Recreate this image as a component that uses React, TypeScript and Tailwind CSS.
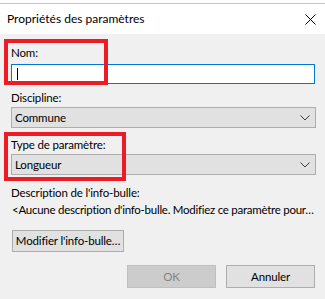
import React from "react"

const ChevronDown = () => (
  <svg width="10" height="6" viewBox="0 0 10 6" className="shrink-0">
    <path d="M0.5 0.5 L5 5 L9.5 0.5" fill="none" stroke="#3c3c3c" strokeWidth="1" />
  </svg>
)

const CloseIcon = () => (
  <svg width="11" height="11" viewBox="0 0 11 11">
    <path d="M0.5 0.5 L10.5 10.5 M10.5 0.5 L0.5 10.5" fill="none" stroke="#000" strokeWidth="1" />
  </svg>
)

function Combo({ value }: { value: string }) {
  return (
    <div className="mt-[1px] flex h-[21px] w-[305px] items-center justify-between border border-[#adadad] bg-[#e1e1e1] pl-[3px] pr-[5px]">
      <span className="leading-[16px]">{value}</span>
      <ChevronDown />
    </div>
  )
}

export default function App() {
  return (
    <div
      className="relative h-[299px] w-[325px] overflow-hidden bg-[#f0f0f0] text-[11.5px] tracking-[-0.15px] text-black"
      style={{ fontFamily: 'Lato, "Noto Sans", sans-serif' }}
    >
      {/* window frame */}
      <div className="h-[3px] bg-white" />
      <div className="h-[1px] bg-[#c4c4c4]" />
      <div className="flex h-[30px] items-center justify-between bg-white pl-[7px] pr-[9px]">
        <span className="text-[12px] leading-[16px] tracking-normal">Propriétés des paramètres</span>
        <CloseIcon />
      </div>

      <div className="flex flex-col px-[11px] pt-[11px]">
        <label className="leading-[16px]">Nom:</label>
        <div className="mt-[3px] flex h-[20px] w-[304px] items-center border border-[#0078d7] bg-white pl-[5px]">
          <div className="h-[12px] w-[1px] bg-black" />
        </div>

        <label className="mt-[6px] leading-[16px]">Discipline:</label>
        <Combo value="Commune" />

        <label className="mt-[9px] leading-[16px]">Type de paramètre:</label>
        <Combo value="Longueur" />

        <label className="mt-[10px] leading-[16px]">Description de l'info-bulle:</label>
        <p className="ml-[1px] mt-[1px] whitespace-nowrap leading-[16px] tracking-[-0.26px]">
          &lt;Aucune description d'info-bulle. Modifiez ce paramètre pour…
        </p>

        <button className="ml-[1px] mt-[12px] h-[22px] w-[112px] whitespace-nowrap border border-[#adadad] bg-[#e1e1e1] leading-[16px]">
          Modifier l'info-bulle…
        </button>

        <div className="mt-[13px] flex justify-end gap-[10px]">
          <button
            disabled
            className="h-[23px] w-[89px] border border-[#bfbfbf] bg-[#cccccc] leading-[16px] text-[#838383]"
          >
            OK
          </button>
          <button className="mr-[-1px] h-[23px] w-[89px] border border-[#adadad] bg-[#e1e1e1] leading-[16px]">
            Annuler
          </button>
        </div>
      </div>

      {/* annotation boxes */}
      <div className="absolute left-[4px] top-[39px] h-[46px] w-[104px] border-4 border-[#ed1c24]" />
      <div className="absolute left-[4px] top-[132px] h-[49px] w-[122px] border-4 border-[#ed1c24]" />
    </div>
  )
}
